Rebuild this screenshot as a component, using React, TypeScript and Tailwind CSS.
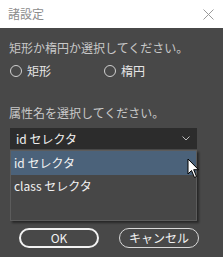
import React from "react";

const font = { fontFamily: '"Noto Sans CJK JP", "Noto Sans", sans-serif' };

function Radio({ label }: { label: string }) {
  return (
    <div className="flex items-center gap-[5px]">
      <span className="block w-[12px] h-[12px] rounded-full border border-[#d0d0d0]" />
      <span className="text-[12px] leading-[16px] text-[#e6e6e6]">{label}</span>
    </div>
  );
}

export default function App() {
  return (
    <div className="w-[223px] h-[257px] bg-[#484848] flex flex-col overflow-hidden relative" style={font}>
      <div className="h-[28px] bg-white flex items-center justify-between pl-[8px] pr-[9px] shrink-0">
        <span className="text-[12px] leading-[16px] text-[#8c8c8c]">諸設定</span>
        <svg width="11" height="11" viewBox="0 0 11 11">
          <path d="M0.5 0.5 L10.5 10.5 M10.5 0.5 L0.5 10.5" stroke="#9a9a9a" strokeWidth="1" fill="none" />
        </svg>
      </div>
      <div className="flex flex-col px-[9px]">
        <div className="mt-[12px] text-[12px] leading-[16px] text-[#c8c8c8]">矩形か楕円か選択してください。</div>
        <div className="mt-[7px] flex items-center pl-[1px] gap-[53px]">
          <Radio label="矩形" />
          <Radio label="楕円" />
        </div>
        <div className="mt-[26px] text-[12px] leading-[16px] text-[#c8c8c8]">属性名を選択してください。</div>
        <div className="relative mt-[7px] ml-[1px] w-[187px]">
          <div className="h-[21px] bg-[#2c2c2c] flex items-center justify-between pl-[6px] pr-[7px]">
            <span className="text-[12px] leading-[16px] text-[#f0f0f0]">id セレクタ</span>
            <svg width="8" height="5" viewBox="0 0 8 5">
              <path d="M0.5 0.5 L4 4 L7.5 0.5" stroke="#bdbdbd" strokeWidth="1" fill="none" />
            </svg>
          </div>
          <div className="absolute left-0 top-[22px] w-[187px] h-[71px] bg-[#474747] border border-[#5c5c5c] shadow-[2px_2px_2px_rgba(0,0,0,0.45)] flex flex-col">
            <div className="h-[24px] bg-[#4b627a] flex items-center pl-[3px]">
              <span className="text-[12px] leading-[16px] text-[#f2f2f2]">id セレクタ</span>
            </div>
            <div className="h-[22px] flex items-center pl-[3px]">
              <span className="text-[12px] leading-[16px] text-[#f2f2f2]">class セレクタ</span>
            </div>
          </div>
        </div>
        <div className="mt-[79px] flex items-center pl-[10px] gap-[20px]">
          <button className="w-[80px] h-[20px] rounded-full border-2 border-[#f2f2f2] text-[12px] leading-[16px] text-[#f2f2f2] flex items-center justify-center">OK</button>
          <button className="w-[80px] h-[20px] rounded-full border border-[#d8d8d8] text-[12px] leading-[16px] text-[#f2f2f2] flex items-center justify-center">キャンセル</button>
        </div>
      </div>
      <svg className="absolute left-[187px] top-[158px]" width="13" height="21" viewBox="0 0 13 21">
        <path d="M1 1 L1 16 L4.5 12.5 L7.5 19.5 L9.5 18.5 L6.7 11.7 L11.5 11.7 Z" fill="white" stroke="black" strokeWidth="1" strokeLinejoin="miter" />
      </svg>
    </div>
  );
}
